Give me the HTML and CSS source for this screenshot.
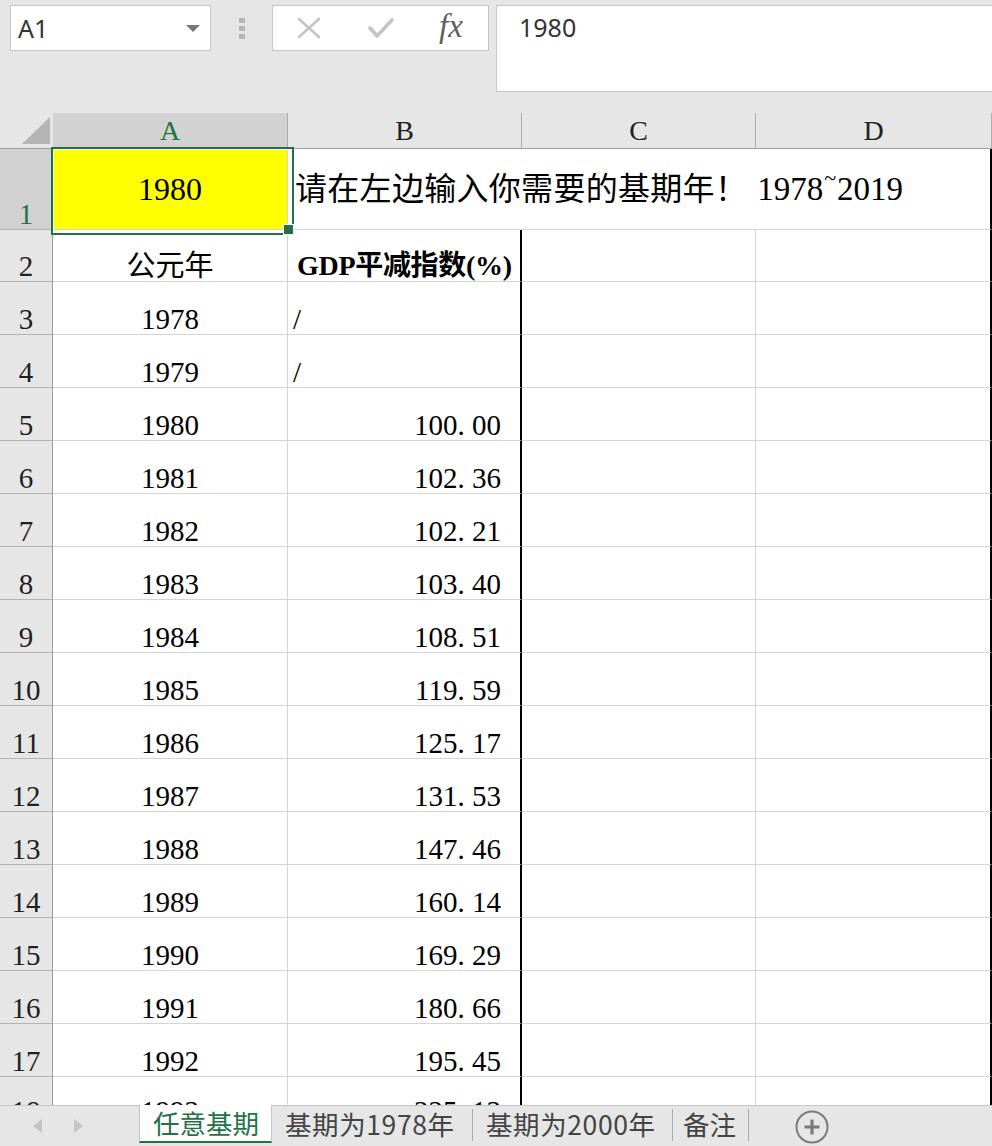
FILE: index.html
```html
<!DOCTYPE html>
<html lang="zh-CN">
<head>
<meta charset="utf-8">
<title>GDP平减指数</title>
<link rel="stylesheet" href="styles.css">
</head>
<body>
<div class="toolbar">
  <div class="namebox"><span>A1</span><span class="caret"></span></div>
  <div class="grip"><i></i><i></i><i></i></div>
  <div class="fxbox">
    <svg class="ico-x" width="24" height="22" viewBox="0 0 24 22"><path d="M2 2 L22 20 M22 2 L2 20" stroke="#c4c4c4" stroke-width="2.6" fill="none" stroke-linecap="round"/></svg>
    <svg class="ico-ok" width="26" height="22" viewBox="0 0 26 22"><path d="M2 11 L9 19 L24 3" stroke="#c4c4c4" stroke-width="3.6" fill="none" stroke-linecap="round" stroke-linejoin="round"/></svg>
    <span class="fx">fx</span>
  </div>
  <div class="formula">1980</div>
</div>

<div class="sheet">
  <div class="h corner"><svg width="53" height="35" viewBox="0 0 53 35"><polygon points="22,31 50,4 50,31" fill="#b4b4b4"/></svg></div>
  <div class="h colsel">A</div>
  <div class="h">B</div>
  <div class="h">C</div>
  <div class="h">D</div>

  <div class="r rowsel">1</div>
  <div class="c sel">1980</div>
  <div class="c b1"><span>请在左边输入你需要的基期年！<span class="yr">1978<span class="tilde">~</span>2019</span></span></div>

  <div class="r">2</div>
  <div class="c ca">公元年</div>
  <div class="c cb b2">GDP平减指数(%)</div>
  <div class="c"></div>
  <div class="c cd"></div>

  <div class="r">3</div><div class="c ca">1978</div><div class="c cb slash">/</div><div class="c"></div><div class="c cd"></div>
  <div class="r">4</div><div class="c ca">1979</div><div class="c cb slash">/</div><div class="c"></div><div class="c cd"></div>
  <div class="r">5</div><div class="c ca">1980</div><div class="c cb num">100<span class="dot">.</span>00</div><div class="c"></div><div class="c cd"></div>
  <div class="r">6</div><div class="c ca">1981</div><div class="c cb num">102<span class="dot">.</span>36</div><div class="c"></div><div class="c cd"></div>
  <div class="r">7</div><div class="c ca">1982</div><div class="c cb num">102<span class="dot">.</span>21</div><div class="c"></div><div class="c cd"></div>
  <div class="r">8</div><div class="c ca">1983</div><div class="c cb num">103<span class="dot">.</span>40</div><div class="c"></div><div class="c cd"></div>
  <div class="r">9</div><div class="c ca">1984</div><div class="c cb num">108<span class="dot">.</span>51</div><div class="c"></div><div class="c cd"></div>
  <div class="r">10</div><div class="c ca">1985</div><div class="c cb num">119<span class="dot">.</span>59</div><div class="c"></div><div class="c cd"></div>
  <div class="r">11</div><div class="c ca">1986</div><div class="c cb num">125<span class="dot">.</span>17</div><div class="c"></div><div class="c cd"></div>
  <div class="r">12</div><div class="c ca">1987</div><div class="c cb num">131<span class="dot">.</span>53</div><div class="c"></div><div class="c cd"></div>
  <div class="r">13</div><div class="c ca">1988</div><div class="c cb num">147<span class="dot">.</span>46</div><div class="c"></div><div class="c cd"></div>
  <div class="r">14</div><div class="c ca">1989</div><div class="c cb num">160<span class="dot">.</span>14</div><div class="c"></div><div class="c cd"></div>
  <div class="r">15</div><div class="c ca">1990</div><div class="c cb num">169<span class="dot">.</span>29</div><div class="c"></div><div class="c cd"></div>
  <div class="r">16</div><div class="c ca">1991</div><div class="c cb num">180<span class="dot">.</span>66</div><div class="c"></div><div class="c cd"></div>
  <div class="r">17</div><div class="c ca">1992</div><div class="c cb num">195<span class="dot">.</span>45</div><div class="c"></div><div class="c cd"></div>
  <div class="r r18">18</div><div class="c ca r18">1993</div><div class="c cb num r18">225<span class="dot">.</span>13</div><div class="c"></div><div class="c cd"></div>
</div>

<div class="tabbar">
  <div class="nav"><span class="arr-l"></span><span class="arr-r"></span></div>
  <div class="tab active">任意基期</div>
  <div class="tab t2">基期为1978年</div>
  <span class="tsep"></span>
  <div class="tab t3">基期为2000年</div>
  <span class="tsep"></span>
  <div class="tab t4">备注</div>
  <span class="tsep"></span>
  <svg class="add" width="34" height="34" viewBox="0 0 34 34"><circle cx="17" cy="17" r="15.5" fill="none" stroke="#7a7a7a" stroke-width="2"/><path d="M17 9.5 V24.5 M9.5 17 H24.5" stroke="#7a7a7a" stroke-width="3.2"/></svg>
</div>
</body>
</html>
```

FILE: styles.css
```css
* { box-sizing: border-box; }
html, body { margin: 0; padding: 0; }
body {
  width: 992px;
  height: 1146px;
  overflow: hidden;
  background: #fff;
  font-family: "Liberation Serif", "Noto Sans CJK SC", serif;
}

/* ---------- toolbar ---------- */
.toolbar {
  height: 113px;
  background: #e6e6e6;
  display: flex;
  align-items: flex-start;
  padding: 5px 0 0 10px;
}
.namebox {
  width: 201px;
  height: 46px;
  background: #fff;
  border: 1px solid #c6c6c6;
  display: flex;
  align-items: center;
  justify-content: space-between;
  padding: 0 10px 0 7px;
  font-family: "Noto Sans", sans-serif;
  font-size: 25px;
  color: #333;
}
.caret {
  width: 0;
  height: 0;
  border-left: 7px solid transparent;
  border-right: 7px solid transparent;
  border-top: 7px solid #777;
}
.grip {
  margin: 13px 0 0 28px;
  display: flex;
  flex-direction: column;
  gap: 3px;
}
.grip i {
  display: block;
  width: 6px;
  height: 5px;
  background: #b4b4b4;
}
.fxbox {
  margin-left: 27px;
  width: 217px;
  height: 46px;
  background: #fff;
  border: 1px solid #c6c6c6;
  display: flex;
  align-items: center;
  padding-left: 24px;
}
.ico-ok { margin-left: 47px; }
.fx {
  margin-left: 45px;
  font-family: "Liberation Serif", serif;
  font-style: italic;
  font-size: 33px;
  color: #606060;
  line-height: 32px;
  margin-top: -4px;
}
.formula {
  margin-left: 7px;
  flex: 1;
  height: 87px;
  background: #fff;
  border: 1px solid #c6c6c6;
  border-right: none;
  padding: 4px 0 0 22px;
  font-family: "Noto Sans", sans-serif;
  font-size: 25px;
  line-height: 34px;
  color: #333;
}

/* ---------- sheet grid ---------- */
.sheet {
  height: 992px;
  overflow: hidden;
  display: grid;
  grid-template-columns: 53px 235px 234px 234px 236px;
  grid-template-rows: 36px 81px 52px repeat(17, 53px);
}
.h {
  background: #e6e6e6;
  border-right: 1px solid #ababab;
  border-bottom: 1px solid #9e9e9e;
  display: flex;
  align-items: center;
  justify-content: center;
  font-size: 28px;
  color: #222;
}
.corner {
  border-right: none;
  align-items: flex-start;
  justify-content: flex-start;
}
.corner svg { display: block; }
.colsel { background: #d2d2d2; color: #217346; }

.r {
  background: #e6e6e6;
  border-right: 1px solid #9e9e9e;
  border-bottom: 1px solid #b4b4b4;
  display: flex;
  align-items: flex-end;
  justify-content: center;
  font-size: 29px;
  line-height: 30px;
  color: #1f1f1f;
}
.rowsel { background: #d2d2d2; color: #217346; }

.c {
  border-right: 1px solid #d4d4d4;
  border-bottom: 1px solid #d4d4d4;
  display: flex;
  align-items: flex-end;
  font-size: 29px;
  line-height: 30px;
  color: #000;
  white-space: nowrap;
}
.ca { justify-content: center; }
.cb { border-right: 2px solid #000; }
.cd { border-right: 2px solid #000; }
.b2 { padding-left: 9px; font-weight: bold; font-size: 28px; letter-spacing: -0.3px; }
.slash { padding-left: 5px; }
.num { justify-content: flex-end; padding-right: 19px; }
.dot { display: inline-block; width: 0.5em; }
.r18 { align-items: flex-start; padding-top: 19px; }

.sel {
  position: relative;
  z-index: 2;
  background: #ffff00;
  justify-content: center;
  align-items: center;
  font-size: 32px;
  line-height: 32px;
}
.sel::after {
  content: "";
  position: absolute;
  left: -2px;
  top: -2px;
  width: 239px;
  height: 84px;
  border: 2px solid #217346;
  box-shadow: inset 0 0 0 1px #fff;
}
.sel::before {
  content: "";
  position: absolute;
  left: 230px;
  top: 75px;
  width: 9px;
  height: 9px;
  background: #217346;
  border: 1px solid #fff;
  z-index: 3;
}
.b1 {
  grid-column: span 3;
  border-right: 2px solid #000;
  align-items: center;
  padding-left: 7px;
  font-size: 32px;
  line-height: 32px;
  letter-spacing: 0.3px;
}
.yr { margin-left: 10px; font-size: 33px; letter-spacing: 0; }
.tilde { font-size: 22px; line-height: 0; vertical-align: 0.7em; margin: 0 1px; }

/* ---------- tab bar ---------- */
.tabbar {
  height: 41px;
  background: #e6e6e6;
  border-top: 1px solid #c6c6c6;
  display: flex;
  align-items: flex-start;
  font-family: "Noto Sans CJK SC", sans-serif;
  font-size: 26.5px;
  color: #444;
}
.nav {
  width: 139px;
  height: 40px;
  display: flex;
  align-items: center;
  padding-left: 33px;
  gap: 32px;
}
.arr-l, .arr-r {
  width: 0;
  height: 0;
  border-top: 7px solid transparent;
  border-bottom: 7px solid transparent;
}
.arr-l { border-right: 9px solid #c4c4c4; }
.arr-r { border-left: 9px solid #c4c4c4; }
.tab {
  height: 38px;
  display: flex;
  align-items: center;
  padding-left: 13px;
  white-space: nowrap;
  line-height: 34px;
  padding-bottom: 2px;
}
.active {
  width: 133px;
  margin-top: -1px;
  background: #fff;
  color: #217346;
  border-left: 1px solid #c6c6c6;
  border-right: 1px solid #c6c6c6;
  border-bottom: 2px solid #217346;
  padding-bottom: 0;
}
.t2 { width: 200px; letter-spacing: 0.6px; }
.t3 { width: 199px; letter-spacing: 0.6px; }
.t4 { width: 75px; padding-left: 10px; }
.tsep {
  width: 1px;
  height: 32px;
  margin-top: 3px;
  background: #ababab;
}
.add { margin: 4px 0 0 46px; }
```
